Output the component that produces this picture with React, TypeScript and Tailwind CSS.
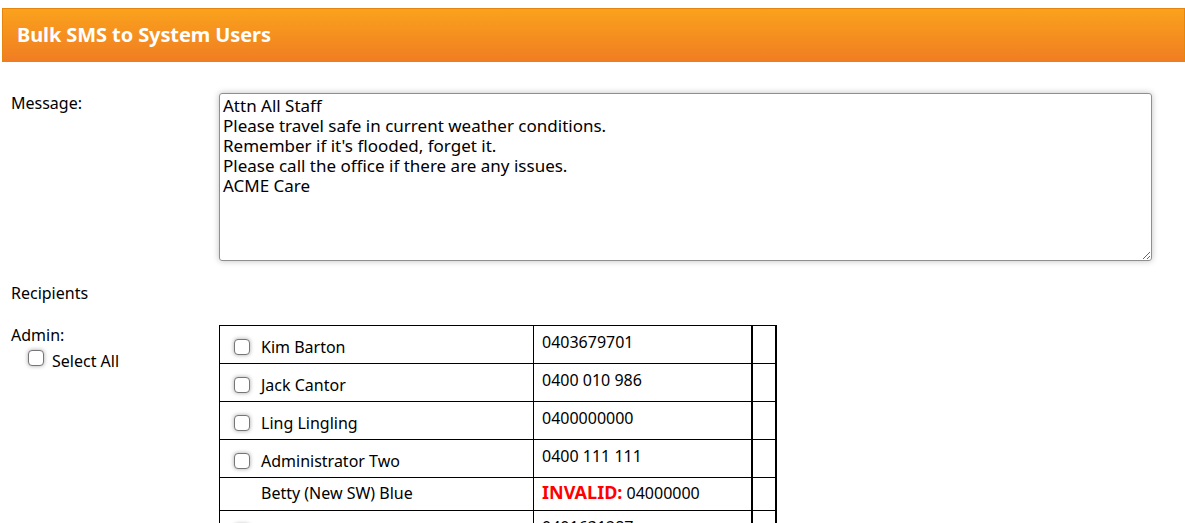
import { useState } from 'react';

interface Recipient {
  id: number;
  name: string;
  phone: string;
  valid: boolean;
}

const admins: Recipient[] = [
  { id: 1, name: 'Kim Barton', phone: '0403679701', valid: true },
  { id: 2, name: 'Jack Cantor', phone: '0400 010 986', valid: true },
  { id: 3, name: 'Ling Lingling', phone: '0400000000', valid: true },
  { id: 4, name: 'Administrator Two', phone: '0400 111 111', valid: true },
  { id: 5, name: 'Betty (New SW) Blue', phone: '04000000', valid: false },
  { id: 6, name: 'Sam Rowe', phone: '0401631287', valid: true },
];

const defaultMessage = `Attn All Staff
Please travel safe in current weather conditions.
Remember if it's flooded, forget it.
Please call the office if there are any issues.
ACME Care`;

function Checkbox({ checked, onChange }: { checked: boolean; onChange: () => void }) {
  return (
    <input
      type="checkbox"
      checked={checked}
      onChange={onChange}
      className="appearance-none w-[16px] h-[16px] rounded-[4px] border border-[#767676] bg-white shadow-[0_0_4px_rgba(0,0,0,0.35)] checked:bg-[#0075ff] checked:border-[#0075ff] shrink-0"
    />
  );
}

export default function App() {
  const [message, setMessage] = useState(defaultMessage);
  const [selected, setSelected] = useState<number[]>([]);

  const toggle = (id: number) => {
    setSelected((s) => (s.includes(id) ? s.filter((x) => x !== id) : [...s, id]));
  };

  const validIds = admins.filter((a) => a.valid).map((a) => a.id);
  const allSelected = validIds.every((id) => selected.includes(id));

  const toggleAll = () => {
    setSelected(allSelected ? [] : validIds);
  };

  return (
    <div className="min-h-screen bg-white text-black font-['Noto_Sans',sans-serif] pt-[8px] pl-[2px]">
      <div className="h-[54px] border border-[#e6850e] bg-gradient-to-b from-[#faa21c] to-[#f07d22] flex items-center pl-[14px]">
        <h1 className="text-white font-bold text-[20px] tracking-[-0.1px]">Bulk SMS to System Users</h1>
      </div>

      <div className="flex mt-[31px] pl-[9px]">
        <label className="w-[208px] text-[16px] leading-[20px]">Message:</label>
        <textarea
          value={message}
          onChange={(e) => setMessage(e.target.value)}
          className="w-[933px] h-[168px] border border-[#8f8f8f] rounded-[3px] shadow-[0_0_6px_rgba(0,0,0,0.25)] px-[3px] py-[2px] text-[17px] leading-[20px] outline-none resize"
        />
      </div>

      <div className="pl-[9px] mt-[22px] text-[16px] leading-[20px]">Recipients</div>

      <div className="flex pl-[9px] mt-[22px]">
        <div className="w-[208px] text-[16px] leading-[20px]">
          <div>Admin:</div>
          <label className="flex items-center gap-[8px] pl-[17px]">
            <Checkbox checked={allSelected} onChange={toggleAll} />
            <span className="text-[16px] pt-[6px]">Select All</span>
          </label>
        </div>

        <table className="border-collapse border border-black text-[16px] leading-[20px]">
          <tbody>
            {admins.map((a) => (
              <tr key={a.id} className="border-b border-black">
                <td
                  className={
                    a.valid
                      ? 'w-[314px] border-r border-black px-[14px] pt-[11px] pb-[6px] align-top'
                      : 'w-[314px] border-r border-black px-[14px] pt-[5px] pb-[6px] align-top'
                  }
                >
                  <div className="flex items-center gap-[11px]">
                    {a.valid ? (
                      <Checkbox checked={selected.includes(a.id)} onChange={() => toggle(a.id)} />
                    ) : (
                      <span className="w-[16px] shrink-0" />
                    )}
                    <span>{a.name}</span>
                  </div>
                </td>
                <td
                  className={
                    a.valid
                      ? 'w-[218px] border-r-2 border-black px-[8px] pt-[6px] pb-[11px] align-top'
                      : 'w-[218px] border-r-2 border-black px-[8px] pt-[4px] pb-[7px] align-top'
                  }
                >
                  {a.valid ? (
                    a.phone
                  ) : (
                    <span>
                      <span className="text-[#ff0000] font-bold text-[18px]">INVALID:</span> {a.phone}
                    </span>
                  )}
                </td>
                <td className="w-[24px] border-r-2 border-black"></td>
              </tr>
            ))}
          </tbody>
        </table>
      </div>
    </div>
  );
}
